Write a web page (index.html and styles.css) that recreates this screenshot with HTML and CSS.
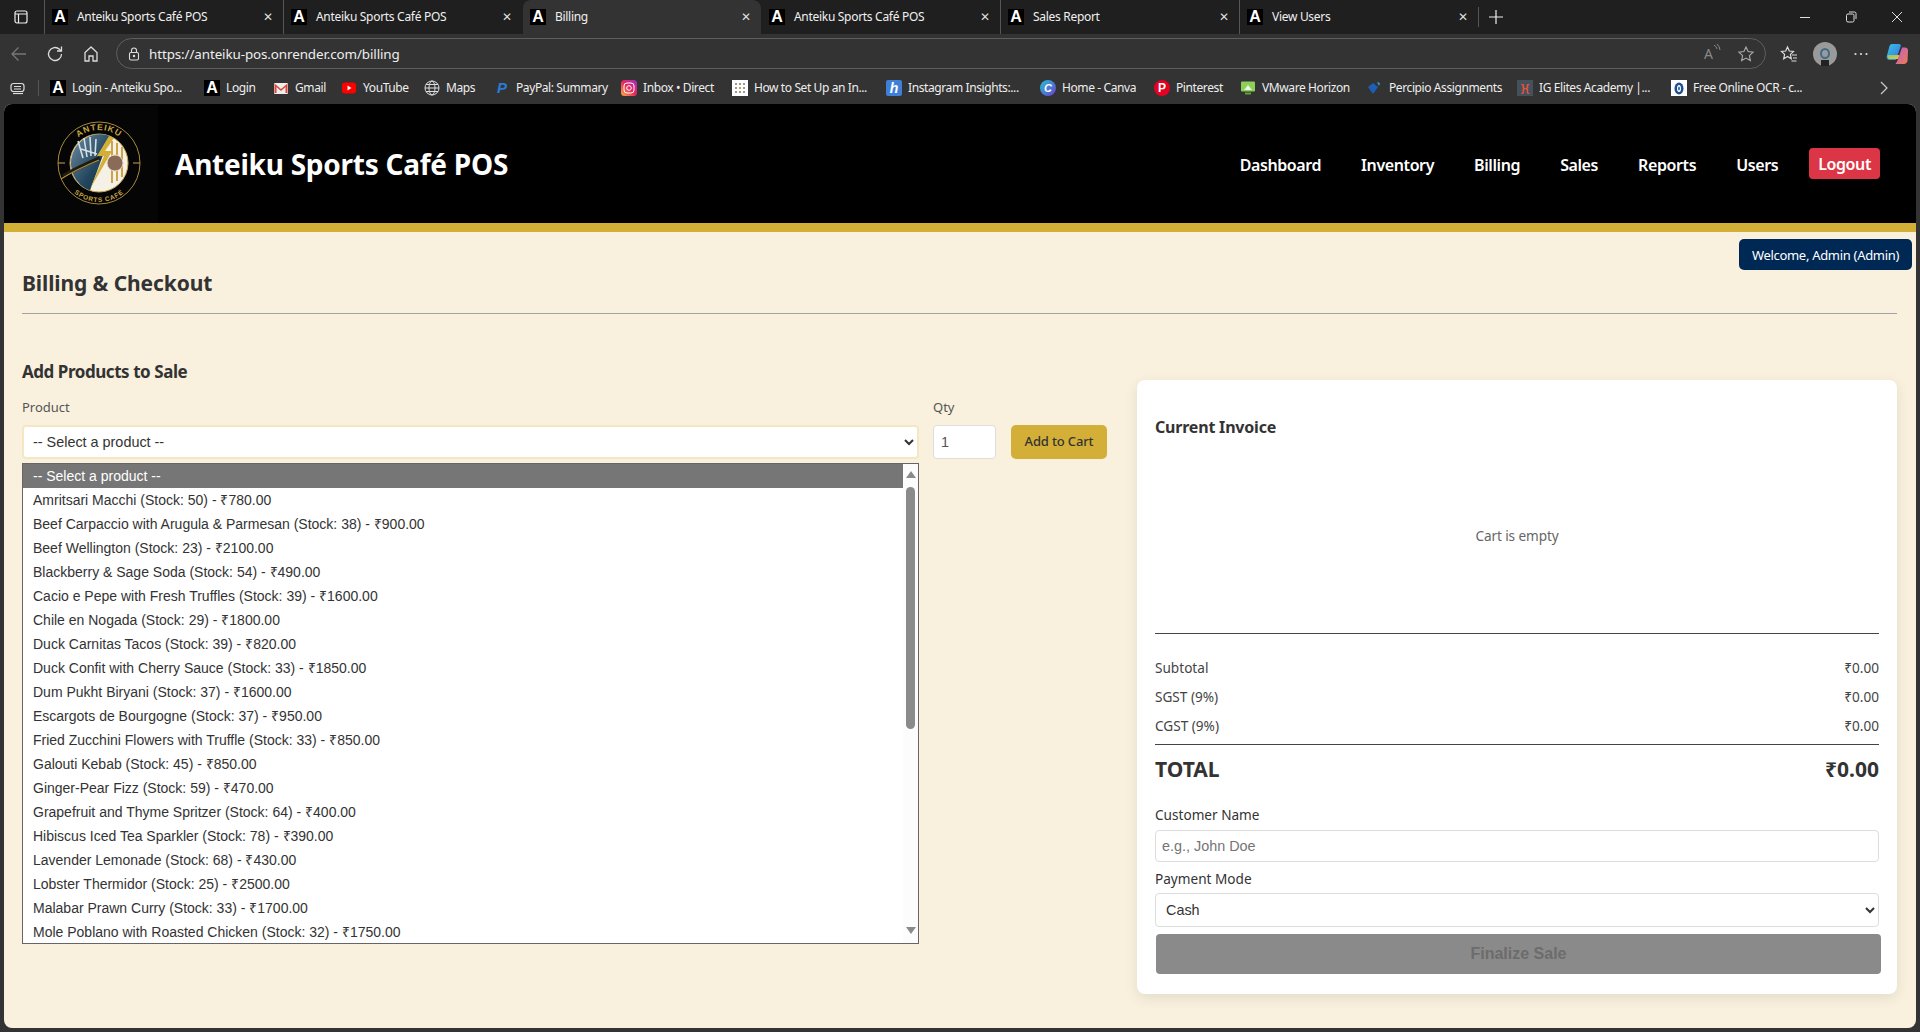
FILE: index.html
```html
<!DOCTYPE html>
<html lang="en">
<head>
    <meta charset="UTF-8">
    <meta name="viewport" content="width=device-width, initial-scale=1.0">
    <title>Billing</title>
    <link rel="stylesheet" href="styles.css">
</head>
<body>
    <!-- browser chrome -->
    <div class="tabstrip">
        <div class="sidebar-btn">
            <svg width="16" height="16" viewBox="0 0 16 16" fill="none" stroke="#eee" stroke-width="1.2"><rect x="2" y="2" width="12" height="12" rx="2"/><path d="M2 5h12M5.5 5v9"/></svg>
        </div>
        <div class="tab"><span class="fav">A</span><span class="tab-title">Anteiku Sports Café POS</span><span class="tab-close">✕</span></div>
        <div class="tab"><span class="fav">A</span><span class="tab-title">Anteiku Sports Café POS</span><span class="tab-close">✕</span></div>
        <div class="tab tab-active"><span class="fav">A</span><span class="tab-title">Billing</span><span class="tab-close">✕</span></div>
        <div class="tab tab-after-active"><span class="fav">A</span><span class="tab-title">Anteiku Sports Café POS</span><span class="tab-close">✕</span></div>
        <div class="tab"><span class="fav">A</span><span class="tab-title">Sales Report</span><span class="tab-close">✕</span></div>
        <div class="tab"><span class="fav">A</span><span class="tab-title">View Users</span><span class="tab-close">✕</span></div>
        <div class="new-tab">
            <svg width="16" height="16" viewBox="0 0 16 16" stroke="#eee" stroke-width="1.2"><path d="M8 1v14M1 8h14"/></svg>
        </div>
        <div class="window-btns">
            <svg width="12" height="12" viewBox="0 0 12 12" stroke="#ddd" fill="none"><path d="M1 6.5h10"/></svg>
            <svg width="12" height="12" viewBox="0 0 12 12" stroke="#ddd" fill="none"><rect x="1.5" y="3" width="7.5" height="8" rx="1.5"/><path d="M4 1h5.5a1.5 1.5 0 0 1 1.5 1.5V8"/></svg>
            <svg width="12" height="12" viewBox="0 0 12 12" stroke="#ddd" fill="none"><path d="M1 1l10 10M11 1L1 11"/></svg>
        </div>
    </div>

    <div class="toolbar">
        <svg class="tool-icon" width="18" height="18" viewBox="0 0 18 18" fill="none" stroke="#777" stroke-width="1.3"><path d="M16 9H2M8.5 2.5L2 9l6.5 6.5"/></svg>
        <svg class="tool-icon" width="18" height="18" viewBox="0 0 18 18" fill="none" stroke="#ddd" stroke-width="1.3"><path d="M15.5 9a6.5 6.5 0 1 1-2-4.7L15 6"/><path d="M15.5 1.5V6H11"/></svg>
        <svg class="tool-icon" width="18" height="18" viewBox="0 0 18 18" fill="none" stroke="#ddd" stroke-width="1.3"><path d="M9 2L3 7.5V16h4v-5h4v5h4V7.5z"/></svg>
        <div class="urlbar">
            <svg width="14" height="14" viewBox="0 0 14 14" fill="none" stroke="#ddd" stroke-width="1.1"><rect x="2.5" y="5.5" width="9" height="7.5" rx="1.5"/><path d="M4.5 5.5V3.5a2.5 2.5 0 0 1 5 0v2"/><circle cx="7" cy="9" r=".7" fill="#ddd"/></svg>
            <span class="url">https://anteiku-pos.onrender.com/billing</span>
            <span class="read-aloud">A<svg width="8" height="10" viewBox="0 0 8 10" fill="none" stroke="#888"><path d="M1 1q3 2 3 4M4 0q3 3 3 6"/></svg></span>
            <svg width="18" height="18" viewBox="0 0 18 18" fill="none" stroke="#aaa" stroke-width="1.1"><path d="M9 2l2.100 4.600 5 .6-3.700 3.400 1 5L9 13.100l-4.400 2.500 1-5L1.900 7.200l5-.6z"/></svg>
        </div>
        <svg class="tool-icon fav-star" width="18" height="18" viewBox="0 0 18 18" fill="none" stroke="#ddd" stroke-width="1.2"><path d="M7.500 2l1.800 4 4.200.5-3.100 2.900.9 4.300-3.800-2.200-3.800 2.200.9-4.300L1.500 6.500 5.700 6zM12 10h5M13 13h4M11.500 16h5"/></svg>
        <div class="avatar"><span class="avatar-ring"></span><span class="avatar-inner"></span></div>
        <svg class="tool-icon dots" width="16" height="16" viewBox="0 0 16 16" fill="#ddd"><circle cx="2.500" cy="8" r="1.100"/><circle cx="8" cy="8" r="1.100"/><circle cx="13.500" cy="8" r="1.100"/></svg>
        <svg class="copilot" width="24" height="24" viewBox="0 0 24 24" fill="none">
            <defs>
                <linearGradient id="copA" x1="0" y1="0" x2="1" y2="1"><stop offset="0" stop-color="#33c4e8"/><stop offset="1" stop-color="#3f6fe0"/></linearGradient>
                <linearGradient id="copB" x1="0" y1="0" x2="1" y2="1"><stop offset="0" stop-color="#b65fd8"/><stop offset="1" stop-color="#f47b4b"/></linearGradient>
                <linearGradient id="copC" x1="0" y1="0" x2="1" y2="1"><stop offset="0" stop-color="#7bd06a"/><stop offset="1" stop-color="#f5c33b"/></linearGradient>
            </defs>
            <path d="M7 2h7c1 0 1.600.6 1.900 1.500L11 18H5C2.500 18 1 16 2 13.500L4.500 4C5 2.800 5.800 2 7 2z" fill="url(#copA)"/>
            <path d="M4 17h9l1.500-4H2.500C2.300 15 3 16.500 4 17z" fill="url(#copC)"/>
            <path d="M13 22h6c2 0 3-1.500 3.500-3L23 9c.3-2-1-3.500-3-3.500h-3L13 17c-.5 1.500-1 3-2.500 5z" fill="url(#copB)"/>
        </svg>
    </div>

    <div class="bookmarks">
        <svg class="bm-collect" width="16" height="16" viewBox="0 0 16 16" fill="none" stroke="#ddd" stroke-width="1.200"><rect x="1" y="3.500" width="13" height="8" rx="2.500"/><path d="M4 6.500h7M4 9h7"/><path d="M3 13.500h10"/></svg>
        <span class="bm-sep"></span>
        <a class="bm bm-w1"><span class="fav">A</span>Login - Anteiku Spo...</a>
        <a class="bm bm-w2"><span class="fav">A</span>Login</a>
        <a class="bm bm-w3"><svg width="16" height="16" viewBox="0 0 16 16"><rect x="1" y="3" width="14" height="11" rx="1" fill="#eee"/><path d="M1.500 3.500L8 9l6.500-5.500V13h-2V7L8 11 3.500 7v6h-2z" fill="#d8483b"/></svg>Gmail</a>
        <a class="bm bm-w4"><svg width="16" height="16" viewBox="0 0 16 16"><rect x="1" y="2.500" width="14" height="11" rx="3" fill="#f00"/><path d="M6.500 5.500l4 2.500-4 2.500z" fill="#fff"/></svg>YouTube</a>
        <a class="bm bm-w5"><svg width="16" height="16" viewBox="0 0 16 16" fill="none" stroke="#ddd"><circle cx="8" cy="8" r="7"/><ellipse cx="8" cy="8" rx="3" ry="7"/><path d="M1 8h14M2 4.500h12M2 11.500h12"/></svg>Maps</a>
        <a class="bm bm-w6"><span class="ico-paypal">P</span>PayPal: Summary</a>
        <a class="bm bm-w7"><svg width="16" height="16" viewBox="0 0 16 16" fill="none"><defs><linearGradient id="igG" x1="0" y1="1" x2="1" y2="0"><stop offset="0" stop-color="#fdb243"/><stop offset=".5" stop-color="#e8265d"/><stop offset="1" stop-color="#a02fc4"/></linearGradient></defs><rect width="16" height="16" rx="3.500" fill="url(#igG)"/><rect x="3" y="3" width="10" height="10" rx="3" stroke="#fff"/><circle cx="8" cy="8" r="2.300" stroke="#fff"/></svg>Inbox • Direct</a>
        <a class="bm bm-w8"><svg width="16" height="16" viewBox="0 0 16 16"><rect width="16" height="16" fill="#fff"/><path d="M3 3h2v2H3zM7 3h2v2H7zM11 3h2v2h-2zM3 7h2v2H3zM7 7h2v2H7zM11 7h2v2h-2zM3 11h2v2H3zM7 11h2v2H7zM11 11h2v2h-2z" fill="#999"/><path d="M7 7h2v2H7z" fill="#e0a030"/></svg>How to Set Up an In...</a>
        <a class="bm bm-w9"><span class="ico-h">h</span>Instagram Insights:...</a>
        <a class="bm bm-w10"><span class="ico-canva">C</span>Home - Canva</a>
        <a class="bm bm-w11"><span class="ico-pin">P</span>Pinterest</a>
        <a class="bm bm-w12"><svg width="16" height="16" viewBox="0 0 16 16"><rect x="1" y="1.500" width="14" height="10" rx="1" fill="#8ecf5a"/><path d="M4 10l4-5 4 5z" fill="#e9f7dc"/><rect x="5" y="12.500" width="6" height="2" fill="#5fa336"/></svg>VMware Horizon</a>
        <a class="bm bm-w13"><svg width="16" height="16" viewBox="0 0 16 16"><path d="M1 7l5-4 5 4-5 7z" fill="#1d5fb5"/><path d="M10 2l3 1-1 3z" fill="#2fa3dc"/></svg>Percipio Assignments</a>
        <a class="bm bm-w14"><span class="ico-ig">}{</span>IG Elites Academy |...</a>
        <a class="bm bm-w15"><svg width="16" height="16" viewBox="0 0 16 16"><rect width="16" height="16" fill="#fff"/><ellipse cx="8" cy="8.500" rx="4.500" ry="6" fill="#1d4f91"/><ellipse cx="8" cy="8.500" rx="2" ry="3.500" fill="#fff"/><ellipse cx="8" cy="8.500" rx=".8" ry="2" fill="#1d4f91"/></svg>Free Online OCR - c...</a>
        <svg class="bm-more" width="12" height="14" viewBox="0 0 12 14" fill="none" stroke="#ccc" stroke-width="1.200"><path d="M3 1l6 6-6 6"/></svg>
    </div>

    <!-- the page itself -->
    <div class="page">
        <header class="site-header">
            <svg class="logo" width="118" height="118" viewBox="0 0 118 118">
                <defs>
                    <linearGradient id="logoBlue" x1="0" y1="0" x2="1" y2="1"><stop offset="0" stop-color="#6f8fa3"/><stop offset=".6" stop-color="#23465e"/><stop offset="1" stop-color="#0f2b40"/></linearGradient>
                    <path id="arcTop" d="M26 58a33 33 0 0 1 66 0"/>
                    <path id="arcBottom" d="M20 58a39 39 0 0 0 78 0"/>
                </defs>
                <rect width="118" height="118" fill="#050505"/>
                <circle cx="59" cy="58" r="41" fill="#050505" stroke="#a88a3c" stroke-width="1"/>
                <circle cx="59" cy="58" r="29" fill="#f6f1e6" stroke="#c9a646" stroke-width="1"/>
                <path d="M70 31A29 29 0 1 0 50 85.600z" fill="url(#logoBlue)"/>
                <path d="M38 36l5 17M44 33l3 19M50 32l1 19M56 34l-1 17M41 44l16 5" stroke="#d5dfe6" stroke-width="1.600" fill="none"/>
                <path d="M72 36v42M77 38v38M82 42v30" stroke="#c99b35" stroke-width="1.800"/>
                <path d="M69 31l-12 20h7L50 84l22-38h-7l9-13z" fill="#d4af37"/>
                <circle cx="75" cy="58" r="8" fill="#8a6b58" stroke="#e6d9bd"/>
                <path d="M23 71q14-8 37-18" stroke="#211a10" stroke-width="4" fill="none"/>
                <path d="M21 74q14-9 38-19" stroke="#b08f3c" stroke-width="1.200" fill="none"/>
                <path d="M18 58h7M93 58h7" stroke="#c9a646" stroke-width="1.200"/>
                <text class="logo-text" font-size="8.500" letter-spacing="1"><textPath href="#arcTop" startOffset="50%" text-anchor="middle">ANTEIKU</textPath></text>
                <text class="logo-text" font-size="6.500" letter-spacing=".7"><textPath href="#arcBottom" startOffset="50%" text-anchor="middle">SPORTS CAFÉ</textPath></text>
            </svg>
            <div class="site-title">Anteiku Sports Café POS</div>
            <nav class="site-nav">
                <a class="nav-link">Dashboard</a>
                <a class="nav-link">Inventory</a>
                <a class="nav-link">Billing</a>
                <a class="nav-link">Sales</a>
                <a class="nav-link">Reports</a>
                <a class="nav-link">Users</a>
                <a class="nav-link logout">Logout</a>
            </nav>
        </header>

        <div class="welcome">Welcome, Admin (Admin)</div>

        <main class="content">
            <h2 class="page-title">Billing &amp; Checkout</h2>

            <div class="billing-grid">
                <section class="add-products">
                    <h3 class="section-title">Add Products to Sale</h3>
                    <div class="add-row">
                        <div class="field-product">
                            <label class="field-label">Product</label>
                            <select class="product-select"><option>-- Select a product --</option></select>
                        </div>
                        <div class="field-qty">
                            <label class="field-label">Qty</label>
                            <input class="qty-input" type="text" value="1">
                        </div>
                        <button class="add-btn">Add to Cart</button>
                    </div>

                    <div class="listbox">
                        <ul class="listbox-items">
                            <li class="selected">-- Select a product --</li>
                            <li>Amritsari Macchi (Stock: 50) - ₹780.00</li>
                            <li>Beef Carpaccio with Arugula &amp; Parmesan (Stock: 38) - ₹900.00</li>
                            <li>Beef Wellington (Stock: 23) - ₹2100.00</li>
                            <li>Blackberry &amp; Sage Soda (Stock: 54) - ₹490.00</li>
                            <li>Cacio e Pepe with Fresh Truffles (Stock: 39) - ₹1600.00</li>
                            <li>Chile en Nogada (Stock: 29) - ₹1800.00</li>
                            <li>Duck Carnitas Tacos (Stock: 39) - ₹820.00</li>
                            <li>Duck Confit with Cherry Sauce (Stock: 33) - ₹1850.00</li>
                            <li>Dum Pukht Biryani (Stock: 37) - ₹1600.00</li>
                            <li>Escargots de Bourgogne (Stock: 37) - ₹950.00</li>
                            <li>Fried Zucchini Flowers with Truffle (Stock: 33) - ₹850.00</li>
                            <li>Galouti Kebab (Stock: 45) - ₹850.00</li>
                            <li>Ginger-Pear Fizz (Stock: 59) - ₹470.00</li>
                            <li>Grapefruit and Thyme Spritzer (Stock: 64) - ₹400.00</li>
                            <li>Hibiscus Iced Tea Sparkler (Stock: 78) - ₹390.00</li>
                            <li>Lavender Lemonade (Stock: 68) - ₹430.00</li>
                            <li>Lobster Thermidor (Stock: 25) - ₹2500.00</li>
                            <li>Malabar Prawn Curry (Stock: 33) - ₹1700.00</li>
                            <li>Mole Poblano with Roasted Chicken (Stock: 32) - ₹1750.00</li>
                        </ul>
                        <div class="list-scroll">
                            <span class="arrow-up"></span>
                            <span class="scroll-thumb"></span>
                            <span class="arrow-down"></span>
                        </div>
                    </div>
                </section>

                <aside class="invoice-card">
                    <h3 class="invoice-title">Current Invoice</h3>
                    <div class="cart-area">Cart is empty</div>
                    <div class="totals">
                        <div class="total-row"><span>Subtotal</span><span>₹0.00</span></div>
                        <div class="total-row"><span>SGST (9%)</span><span>₹0.00</span></div>
                        <div class="total-row"><span>CGST (9%)</span><span>₹0.00</span></div>
                    </div>
                    <div class="grand-total"><span>TOTAL</span><span>₹0.00</span></div>
                    <label class="invoice-label customer-label">Customer Name</label>
                    <input class="customer-input" type="text" placeholder="e.g., John Doe">
                    <label class="invoice-label payment-label">Payment Mode</label>
                    <select class="payment-select"><option>Cash</option></select>
                    <button class="finalize-btn" disabled>Finalize Sale</button>
                </aside>
            </div>
        </main>
    </div>
</body>
</html>
```

FILE: styles.css
```css
* {
    box-sizing: border-box;
}
body {
    margin: 0;
    height: 100vh;
    overflow: hidden;
    display: flex;
    flex-direction: column;
    background-color: #333;
    font-family: "Noto Sans", "Open Sans", sans-serif;
    color: #333;
}

/* browser chrome */
.tabstrip {
    height: 34px;
    flex: none;
    display: flex;
    align-items: center;
    background-color: #1f1f1f;
    color: #f0f0f0;
    font-size: 12px;
}
.sidebar-btn {
    width: 44px;
    display: flex;
    justify-content: center;
    padding-right: 3px;
}
.tab {
    width: 239px;
    height: 34px;
    flex: none;
    display: flex;
    align-items: center;
    padding-left: 7px;
    border-left: 1px solid #555;
    background-clip: padding-box;
}
.tab:first-of-type,
.tab-active,
.tab-after-active {
    border-left-color: transparent;
}
.tab-active {
    background-color: #333;
    border-radius: 8px 8px 0 0;
}
.fav {
    width: 16px;
    height: 16px;
    flex: none;
    background-color: #000;
    color: #fff;
    font-family: "Liberation Sans", sans-serif;
    font-size: 16px;
    font-weight: 700;
    line-height: 16px;
    text-align: center;
    letter-spacing: 0;
}
.tab-title {
    margin-left: 9px;
    flex: 1;
    padding-bottom: 2px;
    letter-spacing: -0.3px;
}
.tab-close {
    width: 20px;
    font-size: 12px;
    color: #ddd;
    padding-bottom: 1px;
}
.new-tab {
    display: flex;
    border-left: 1px solid #555;
    padding-left: 9px;
    height: 20px;
    align-items: center;
}
.window-btns {
    margin-left: auto;
    padding-right: 17px;
    display: flex;
    gap: 34px;
}

.toolbar {
    height: 35px;
    flex: none;
    display: flex;
    align-items: center;
    background-color: #333;
    padding: 4px 0 0 10px;
}
.tool-icon {
    flex: none;
    margin-right: 18px;
}
.urlbar {
    width: 1650px;
    height: 31px;
    margin-left: -2px;
    flex: none;
    display: flex;
    align-items: center;
    gap: 8px;
    padding: 0 10px;
    border: 1px solid #5e5e5e;
    border-radius: 16px;
    color: #eee;
    font-size: 13.4px;
}
.url {
    flex: 1;
    letter-spacing: -0.1px;
}
.read-aloud {
    color: #888;
    font-size: 14px;
    margin-right: 8px;
    display: flex;
}
.fav-star {
    margin: 0 0 0 14px;
}
.avatar {
    width: 24px;
    height: 24px;
    margin-left: 15px;
    position: relative;
    border-radius: 50%;
    background-color: #9a9a9a;
    display: flex;
    align-items: flex-end;
    justify-content: center;
    flex: none;
}
.avatar-ring {
    position: absolute;
    top: 6px;
    left: 7px;
    width: 10px;
    height: 11px;
    border: 2px solid #3f6d86;
    border-radius: 50%;
}
.avatar-inner {
    width: 8px;
    height: 6px;
    background-color: #222;
}
.dots {
    margin: 0 0 0 16px;
}
.copilot {
    margin-left: 16px;
    flex: none;
}

.bookmarks {
    height: 35px;
    flex: none;
    display: flex;
    align-items: center;
    padding: 2px 0 0 10px;
    background-color: #333;
    color: #eee;
    font-size: 12px;
    letter-spacing: -0.4px;
}
.bm-collect {
    flex: none;
}
.bm-sep {
    width: 1px;
    height: 16px;
    margin: 0 11px 0 12px;
    background-color: #555;
}
.bm {
    display: flex;
    align-items: center;
    gap: 6px;
    flex: none;
    white-space: nowrap;
}
.bm svg {
    flex: none;
}
.bm-w1 { width: 154px; }
.bm-w2 { width: 69px; }
.bm-w3 { width: 68px; }
.bm-w4 { width: 83px; }
.bm-w5 { width: 70px; }
.bm-w6 { width: 127px; }
.bm-w7 { width: 111px; }
.bm-w8 { width: 154px; }
.bm-w9 { width: 154px; }
.bm-w10 { width: 114px; }
.bm-w11 { width: 86px; }
.bm-w12 { width: 127px; }
.bm-w13 { width: 150px; }
.bm-w14 { width: 154px; }
.bm-w15 { width: 140px; }
.bm-more {
    margin-left: 67px;
}
.ico-paypal,
.ico-h,
.ico-canva,
.ico-pin,
.ico-ig {
    width: 16px;
    height: 16px;
    flex: none;
    font-family: "Liberation Sans", sans-serif;
    font-weight: 700;
    text-align: center;
    line-height: 16px;
    letter-spacing: 0;
}
.ico-paypal {
    color: #2a7bd6;
    font-size: 15px;
    font-style: italic;
}
.ico-h {
    background-color: #3f7fd8;
    color: #fff;
    font-size: 14px;
    font-style: italic;
    border-radius: 2px;
}
.ico-canva {
    background: linear-gradient(135deg, #27c0cf, #6a3fd6);
    border-radius: 50%;
    color: #fff;
    font-size: 11px;
    font-style: italic;
}
.ico-pin {
    background-color: #e60023;
    border-radius: 50%;
    color: #fff;
    font-size: 12px;
}
.ico-ig {
    background-color: #44505a;
    color: #e8533f;
    font-size: 11px;
}

/* page */
.page {
    flex: 1;
    margin: 0 4px 4px;
    min-height: 0;
    position: relative;
    background-color: #f9f1de;
    border-radius: 8px;
    overflow: hidden;
}
.site-header {
    height: 128px;
    display: flex;
    align-items: center;
    padding: 0 36px 0 36px;
    background-color: #000;
    border-bottom: 9px solid #d4af37;
}
.logo {
    flex: none;
}
.logo-text {
    fill: #c9a646;
    font-family: "Liberation Sans", sans-serif;
    font-weight: 700;
}
.site-title {
    margin-left: 17px;
    color: #fff;
    font-size: 28px;
    font-weight: 700;
    letter-spacing: -0.25px;
}
.site-nav {
    margin-left: auto;
    display: flex;
    align-items: center;
    gap: 40px;
}
.nav-link {
    padding-top: 2px;
    color: #fff;
    font-size: 16px;
    font-weight: 600;
    letter-spacing: -0.4px;
}
.logout {
    margin-left: -9px;
    padding: 2px 9px 0;
    line-height: 29px;
    background-color: #dc3545;
    border-radius: 4px;
}
.welcome {
    position: absolute;
    top: 135px;
    right: 4px;
    width: 173px;
    height: 31px;
    line-height: 33px;
    text-align: center;
    background-color: #002855;
    border-radius: 5px;
    color: #fff;
    font-size: 13px;
    letter-spacing: -0.3px;
}
.content {
    padding: 36px 19px 0 18px;
}
.page-title {
    margin: 0;
    padding-bottom: 15px;
    border-bottom: 1px solid #a0a4a8;
    font-size: 21px;
    line-height: 30px;
    font-weight: 700;
    letter-spacing: -0.1px;
}
.billing-grid {
    margin-top: 46px;
    display: grid;
    grid-template-columns: 1115px 760px;
}
.section-title {
    margin: 0;
    font-size: 17px;
    line-height: 24px;
    font-weight: 700;
    letter-spacing: -0.45px;
}
.add-row {
    margin-top: 13px;
    display: flex;
    align-items: flex-end;
}
.field-label {
    display: block;
    margin-bottom: 8px;
    font-size: 13px;
    line-height: 20px;
    color: #555;
}
.field-product {
    width: 897px;
    flex: none;
}
.product-select {
    display: block;
    width: 100%;
    height: 34px;
    padding-left: 5px;
    border: 2px solid #f5e6c4;
    border-radius: 4px;
    background-color: #fff;
    color: #333;
    font-family: "Liberation Sans", sans-serif;
    font-size: 14.4px;
}
.field-qty {
    width: 63px;
    margin-left: 14px;
    flex: none;
}
.qty-input {
    display: block;
    width: 100%;
    height: 34px;
    padding: 0 7px;
    border: 1px solid #ddd;
    border-radius: 4px;
    color: #555;
    font-family: "Liberation Sans", sans-serif;
    font-size: 14.4px;
}
.add-btn {
    width: 96px;
    height: 34px;
    margin-left: 15px;
    padding: 0 0 2px;
    border: none;
    border-radius: 5px;
    background-color: #d4af37;
    color: #333;
    font-family: "Noto Sans", sans-serif;
    font-size: 13px;
    font-weight: 500;
    letter-spacing: -0.15px;
}
.listbox {
    width: 897px;
    height: 481px;
    margin-top: 4px;
    display: flex;
    border: 1px solid #666;
    background-color: #fff;
    overflow: hidden;
}
.listbox-items {
    flex: 1;
    margin: 0;
    padding: 0;
    list-style: none;
    font-family: "Liberation Sans", sans-serif;
    font-size: 14px;
    color: #333;
}
.listbox-items li {
    height: 24px;
    line-height: 24px;
    padding-left: 10px;
}
.listbox-items .selected {
    background-color: #767676;
    color: #fff;
}
.list-scroll {
    width: 15px;
    flex: none;
    display: flex;
    flex-direction: column;
    align-items: center;
    background-color: #fcfcfc;
    padding-top: 7px;
}
.arrow-up,
.arrow-down {
    width: 0;
    height: 0;
    border-left: 5px solid transparent;
    border-right: 5px solid transparent;
}
.arrow-up {
    border-bottom: 7px solid #8a8a8a;
}
.arrow-down {
    margin-top: auto;
    margin-bottom: 9px;
    border-top: 7px solid #8a8a8a;
}
.scroll-thumb {
    width: 9px;
    height: 242px;
    margin-top: 9px;
    background-color: #8a8a8a;
    border-radius: 5px;
}

.invoice-card {
    height: 614px;
    margin-top: 20px;
    display: flex;
    flex-direction: column;
    padding: 35px 18px 0 18px;
    background-color: #fff;
    border-radius: 8px;
    box-shadow: 0 4px 14px rgba(0, 0, 0, 0.09);
}
.invoice-title {
    margin: 0;
    font-size: 16px;
    line-height: 24px;
    font-weight: 700;
    letter-spacing: -0.2px;
}
.cart-area {
    height: 195px;
    padding-bottom: 2px;
    display: flex;
    align-items: center;
    justify-content: center;
    border-bottom: 1px solid #444;
    color: #666;
    font-size: 13.6px;
    letter-spacing: -0.1px;
}
.totals {
    margin-top: 24px;
    padding-bottom: 8px;
    border-bottom: 1px solid #444;
    display: flex;
    flex-direction: column;
    gap: 9px;
}
.total-row {
    display: flex;
    justify-content: space-between;
    font-size: 13.6px;
    line-height: 20px;
    color: #444;
}
.grand-total {
    margin-top: 9px;
    display: flex;
    justify-content: space-between;
    font-size: 21px;
    line-height: 30px;
    font-weight: 700;
}
.invoice-label {
    display: block;
    font-size: 13.6px;
    line-height: 20px;
    color: #333;
}
.customer-label {
    margin-top: 21px;
}
.customer-input {
    display: block;
    width: 100%;
    height: 32px;
    margin-top: 5px;
    padding: 0 6px;
    border: 1px solid #ddd;
    border-radius: 4px;
    font-family: "Liberation Sans", sans-serif;
    font-size: 14.4px;
}
.customer-input::placeholder {
    color: #757575;
}
.payment-label {
    margin-top: 7px;
}
.payment-select {
    display: block;
    width: 100%;
    height: 34px;
    margin-top: 4px;
    padding-left: 6px;
    border: 1px solid #ddd;
    border-radius: 4px;
    background-color: #fff;
    color: #333;
    font-family: "Liberation Sans", sans-serif;
    font-size: 14.4px;
}
.finalize-btn {
    width: 725px;
    height: 40px;
    margin: 7px 0 0 1px;
    flex: none;
    padding: 0;
    border: none;
    border-radius: 4px;
    background-color: #8a8a8a;
    color: #6c6c6c;
    font-family: "Liberation Sans", sans-serif;
    font-size: 16px;
    font-weight: 700;
}
```
